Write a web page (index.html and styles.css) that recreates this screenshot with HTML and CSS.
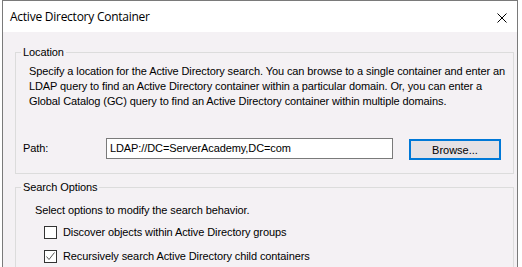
FILE: index.html
```html
<!DOCTYPE html>
<html lang="en">
<head>
  <meta charset="UTF-8">
  <title>Active Directory Container</title>
  <link rel="stylesheet" href="styles.css">
</head>
<body>
  <div class="window">
    <div class="title-bar">
      <span class="title">Active Directory Container</span>
      <svg class="close" width="10" height="10" viewBox="0 0 10 10">
        <path d="M0.5 0.5 L9.5 9.5 M9.5 0.5 L0.5 9.5" stroke="#000" stroke-width="1" fill="none"/>
      </svg>
    </div>
    <div class="content">
      <fieldset class="group">
        <legend>Location</legend>
        <p class="desc">Specify a location for the Active Directory search. You can browse to a single container and enter an<br>LDAP query to find an Active Directory container within a particular domain. Or, you can enter a<br>Global Catalog (GC) query to find an Active Directory container within multiple domains.</p>
        <div class="path-row">
          <label class="path-label">Path:</label>
          <div class="path-input">LDAP://DC=ServerAcademy,DC=com</div>
          <button class="browse">Browse...</button>
        </div>
      </fieldset>
      <fieldset class="group options">
        <legend>Search Options</legend>
        <p class="hint">Select options to modify the search behavior.</p>
        <div class="check-row">
          <span class="check"></span>
          <span>Discover objects within Active Directory groups</span>
        </div>
        <div class="check-row">
          <span class="check">
            <svg width="11" height="11" viewBox="0 0 11 11">
              <path d="M1.5 5.5 L4 8.5 L9.5 1.5" stroke="#555" stroke-width="1" fill="none"/>
            </svg>
          </span>
          <span>Recursively search Active Directory child containers</span>
        </div>
      </fieldset>
    </div>
  </div>
</body>
</html>
```

FILE: styles.css
```css
html, body {
  height: 100%;
}

body {
  margin: 0;
  overflow: hidden;
  background: #fff;
  font-family: "Liberation Sans", Arial, sans-serif;
  font-size: 11px;
  letter-spacing: -0.1px;
  color: #000;
}

.window {
  box-sizing: border-box;
  margin-left: 2px;
  width: 516px;
  height: 100%;
  border: 1px solid #7a7a7a;
  border-bottom: none;
  display: flex;
  flex-direction: column;
}

.title-bar {
  height: 31px;
  background: #fff;
  display: flex;
  align-items: center;
  justify-content: space-between;
  padding: 0 10px 0 7px;
}

.title {
  font-family: "Open Sans", "Liberation Sans", sans-serif;
  font-size: 12px;
  letter-spacing: -0.25px;
}

.close {
  margin-top: 2px;
}

.content {
  flex: 1;
  overflow: hidden;
  background: #f4f1f4;
  padding: 13px 3px 0 12px;
}

.group {
  margin: 0;
  padding: 0 0 13px 0;
  border: 1px solid #dcdcdc;
}

.group legend {
  margin-left: 5px;
  padding: 0 2px;
  line-height: 14px;
}

.desc {
  margin: 5px 0 0 13px;
  line-height: 15px;
  white-space: nowrap;
}

.path-row {
  display: flex;
  align-items: flex-start;
  margin: 29px 0 0 7px;
}

.path-label {
  width: 83px;
  line-height: 21px;
}

.path-input {
  box-sizing: border-box;
  width: 287px;
  height: 21px;
  padding-left: 3px;
  line-height: 19px;
  background: #fff;
  border: 1px solid #7a7a7a;
}

.browse {
  box-sizing: border-box;
  width: 92px;
  height: 21px;
  margin: 1px 0 0 16px;
  padding: 0;
  font: inherit;
  background: #e5e1e5;
  border: 2px solid #0078d7;
}

.options {
  margin-top: 6px;
}

.hint {
  margin: 9px 0 0 19px;
  line-height: 15px;
}

.check-row {
  display: flex;
  align-items: center;
  height: 24px;
  margin-left: 28px;
  gap: 6px;
}

.check-row:first-of-type {
  margin-top: 2px;
}

.check {
  box-sizing: border-box;
  width: 13px;
  height: 13px;
  display: flex;
  align-items: center;
  justify-content: center;
  background: #fff;
  border: 1px solid #333;
}
```
